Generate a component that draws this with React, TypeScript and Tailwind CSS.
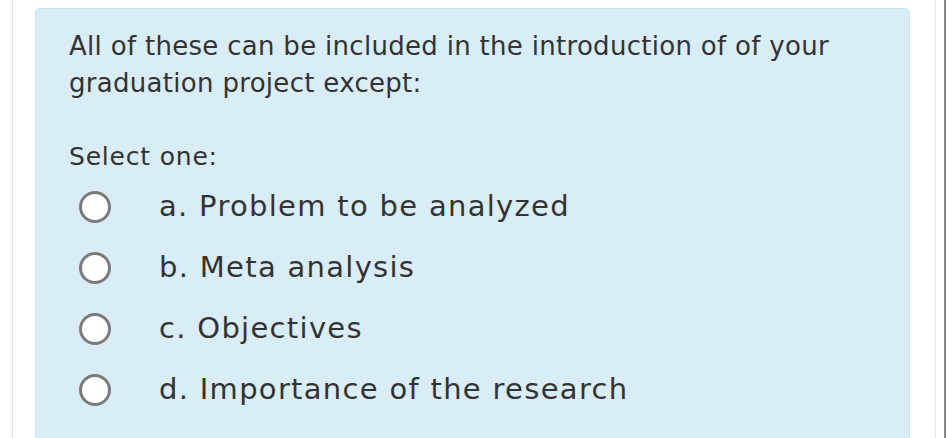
import { FunctionComponent } from "react";

const options = [
  "a. Problem to be analyzed",
  "b. Meta analysis",
  "c. Objectives",
  "d. Importance of the research",
];

const App: FunctionComponent = () => {
  return (
    <div className="w-[947px] h-[438px] overflow-hidden bg-white flex" style={{ fontFamily: '"DejaVu Sans", Verdana, sans-serif' }}>
      <div className="w-[13px] border-r border-[#e2e2e2] shrink-0" />
      <div className="pl-[22px] pt-[8px] w-[897px] shrink-0">
        <div className="h-[460px] bg-[#d9edf7] border border-[#c8e4ef] rounded-[5px] pl-[33px] pt-[19px] text-[#333]">
          <p className="text-[26px] leading-[37px] tracking-[0.3px] pr-[20px]">
            All of these can be included in the introduction of of your graduation project except:
          </p>
          <p className="mt-[40px] text-[25px] leading-[30px] tracking-[0.8px]">Select one:</p>
          <div className="mt-[4px] flex flex-col">
            {options.map((o) => (
              <div key={o} className="h-[61px] flex items-center">
                <span className="ml-[10px] w-[32px] h-[32px] rounded-full bg-white border-[3px] border-[#7a7a7a] shrink-0" />
                <span className="ml-[48px] text-[29px] tracking-[1.3px]">{o}</span>
              </div>
            ))}
          </div>
        </div>
      </div>
      <div className="ml-[25px] w-[11px] border-l border-[#e4e4e4] border-r-[2px] border-r-[#888] shrink-0" />
    </div>
  );
};

export default App;
